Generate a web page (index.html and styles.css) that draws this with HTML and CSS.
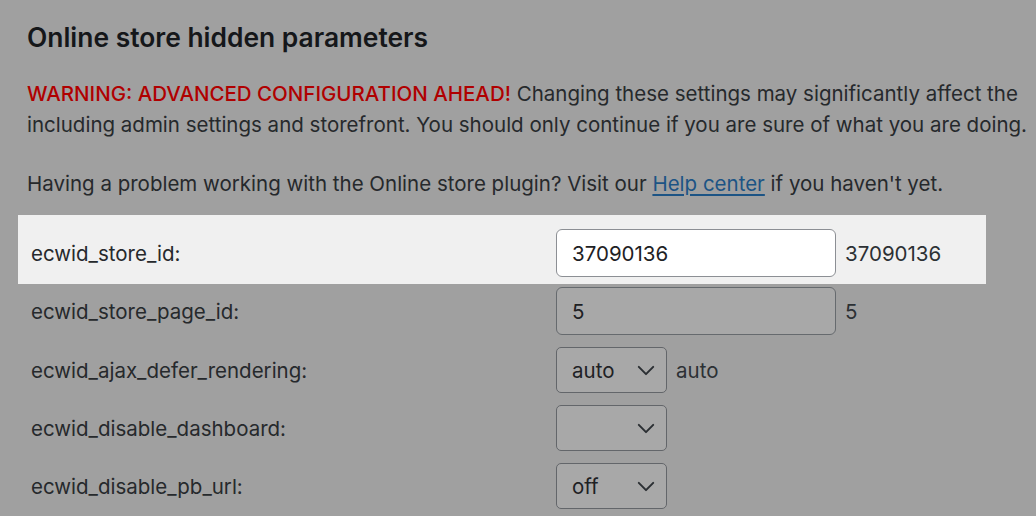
FILE: index.html
```html
<!DOCTYPE html>
<html lang="en">
<head>
<meta charset="utf-8">
<title>Online store hidden parameters</title>
<link rel="stylesheet" href="styles.css">
</head>
<body>
<div class="page">
  <h2 class="title">Online store hidden parameters</h2>
  <p class="warning"><span class="line"><strong class="alert">WARNING: ADVANCED CONFIGURATION AHEAD!</strong> Changing these settings may significantly affect the</span><br><span class="line">including admin settings and storefront. You should only continue if you are sure of what you are doing.</span></p>
  <p class="help">Having a problem working with the Online store plugin? Visit our <a href="#">Help center</a> if you haven't yet.</p>

  <div class="params">
    <div class="row row-focus">
      <label class="label">ecwid_store_id:</label>
      <div class="field">
        <input class="text text-focus" type="text" value="37090136">
        <span class="current">37090136</span>
      </div>
    </div>
    <div class="row">
      <label class="label">ecwid_store_page_id:</label>
      <div class="field">
        <input class="text" type="text" value="5">
        <span class="current">5</span>
      </div>
    </div>
    <div class="row">
      <label class="label">ecwid_ajax_defer_rendering:</label>
      <div class="field">
        <div class="select"><span class="select-value">auto</span><svg class="chev" viewBox="0 0 20 12" width="20" height="12"><path d="M2 2 L10 10 L18 2" fill="none" stroke="#2b2f33" stroke-width="2.2" stroke-linecap="round" stroke-linejoin="round"/></svg></div>
        <span class="current">auto</span>
      </div>
    </div>
    <div class="row">
      <label class="label">ecwid_disable_dashboard:</label>
      <div class="field">
        <div class="select"><span class="select-value"></span><svg class="chev" viewBox="0 0 20 12" width="20" height="12"><path d="M2 2 L10 10 L18 2" fill="none" stroke="#2b2f33" stroke-width="2.2" stroke-linecap="round" stroke-linejoin="round"/></svg></div>
      </div>
    </div>
    <div class="row">
      <label class="label">ecwid_disable_pb_url:</label>
      <div class="field">
        <div class="select"><span class="select-value">off</span><svg class="chev" viewBox="0 0 20 12" width="20" height="12"><path d="M2 2 L10 10 L18 2" fill="none" stroke="#2b2f33" stroke-width="2.2" stroke-linecap="round" stroke-linejoin="round"/></svg></div>
      </div>
    </div>
  </div>
</div>
</body>
</html>
```

FILE: styles.css
```css
html, body {
  margin: 0;
  padding: 0;
  background: #a0a0a0;
  overflow: hidden;
}
body {
  width: 1036px;
  height: 516px;
  font-family: Inter, "Noto Sans", sans-serif;
  color: #26292c;
}
.page {
  padding: 20px 0 0 27px;
}
.title {
  margin: 0;
  font-size: 26.4px;
  line-height: 34px;
  font-weight: 600;
  color: #15171a;
}
.warning {
  margin: 24px 0 0;
  font-size: 20.5px;
  line-height: 31px;
  white-space: nowrap;
}
.alert {
  color: #b00000;
  font-weight: 500;
}
.help {
  margin: 28px 0 0;
  font-size: 20.5px;
  line-height: 31px;
  white-space: nowrap;
}
.help a {
  color: #1c5485;
  text-decoration: underline;
  text-underline-offset: 3px;
}
.params {
  margin: 16px 0 0 -9px;
  width: 968px;
  display: flex;
  flex-direction: column;
  gap: 12px;
}
.row {
  display: flex;
  align-items: center;
  padding-left: 13px;
}
.row-focus {
  background: #f0f0f0;
  padding-top: 14px;
  padding-bottom: 7px;
  margin-bottom: -9px;
}
.label {
  width: 525px;
  font-size: 20.5px;
  color: #26292c;
}
.field {
  display: flex;
  align-items: center;
  gap: 9px;
}
.text {
  box-sizing: border-box;
  width: 280px;
  height: 48px;
  border: 1.5px solid #666a6e;
  border-radius: 6px;
  background: #a8a8a8;
  padding: 0 15px;
  font-family: Inter, "Noto Sans", sans-serif;
  font-size: 20.5px;
  color: #1e2124;
  outline: none;
}
.text-focus {
  background: #ffffff;
  border-color: #8c8f94;
}
.current {
  font-size: 20.5px;
  color: #2c3034;
}
.select {
  box-sizing: border-box;
  width: 111px;
  height: 46px;
  border: 1.5px solid #63666a;
  border-radius: 5px;
  background: #a8a8a8;
  display: flex;
  align-items: center;
  justify-content: space-between;
  padding: 0 11px 0 15px;
  font-size: 20.5px;
  color: #1e2124;
}
.chev {
  width: 18px;
  height: 11px;
  display: block;
}
```
